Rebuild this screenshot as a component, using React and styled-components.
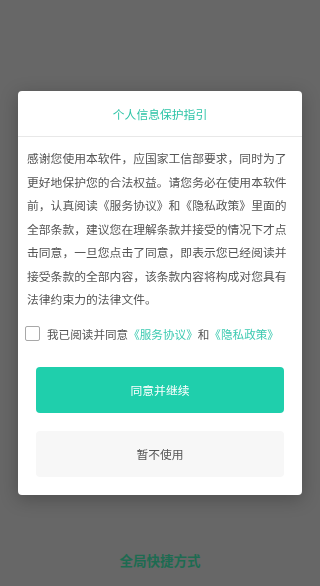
import React, { useState } from "react";
import styled, { createGlobalStyle } from "styled-components";

const COLORS = {
  overlay: "#676767",
  teal: "#1fcfac",
  tealText: "#2ec4a7",
  link: "#3ccab1",
  text: "#555555",
  divider: "#e8e8e8",
  ghost: "#f7f7f7",
};

const GlobalStyle = createGlobalStyle`
  html, body {
    margin: 0;
    padding: 0;
    background: ${COLORS.overlay};
    font-family: "Noto Sans CJK SC", "Noto Sans", sans-serif;
  }
`;

const App = () => {
  const [checked, setChecked] = useState(false);

  return (
    <>
      <GlobalStyle />
      <Page>
        <ShortcutLabel>全局快捷方式</ShortcutLabel>
      </Page>
      <Overlay>
        <Dialog>
          <Header>个人信息保护指引</Header>
          <Body>
            感谢您使用本软件，应国家工信部要求，同时为了更好地保护您的合法权益。请您务必在使用本软件前，认真阅读《服务协议》和《隐私政策》里面的全部条款，建议您在理解条款并接受的情况下才点击同意，一旦您点击了同意，即表示您已经阅读并接受条款的全部内容，该条款内容将构成对您具有法律约束力的法律文件。
          </Body>
          <AgreeRow onClick={() => setChecked(!checked)}>
            <Checkbox $checked={checked} />
            <span>
              我已阅读并同意<Link>《服务协议》</Link>和<Link>《隐私政策》</Link>
            </span>
          </AgreeRow>
          <Actions>
            <Button $primary>同意并继续</Button>
            <Button>暂不使用</Button>
          </Actions>
        </Dialog>
      </Overlay>
    </>
  );
};

const Page = styled.div`
  height: 586px;
  display: flex;
  flex-direction: column;
  justify-content: flex-end;
  align-items: center;
  padding-bottom: 17px;
  box-sizing: border-box;
`;

const ShortcutLabel = styled.div`
  color: #1d6b51;
  font-size: 13.5px;
  font-weight: 700;
  line-height: 18px;
`;

const Overlay = styled.div`
  position: fixed;
  inset: 0;
  display: flex;
  align-items: center;
  justify-content: center;
`;

const Dialog = styled.div`
  width: 284px;
  background: #ffffff;
  border-radius: 4px;
  box-shadow: 0 4px 18px rgba(0, 0, 0, 0.25);
  display: flex;
  flex-direction: column;
  padding-bottom: 18px;
`;

const Header = styled.div`
  height: 45px;
  display: flex;
  align-items: center;
  justify-content: center;
  color: ${COLORS.tealText};
  font-size: 11.8px;
  border-bottom: 1px solid ${COLORS.divider};
`;

const Body = styled.p`
  margin: 0;
  padding: 9px 14px 0 9px;
  color: ${COLORS.text};
  font-size: 11.8px;
  line-height: 23.5px;
`;

const AgreeRow = styled.label`
  display: flex;
  align-items: center;
  gap: 7px;
  margin-top: 13px;
  padding-left: 7px;
  height: 20px;
  color: ${COLORS.text};
  font-size: 11.6px;
  cursor: pointer;
`;

const Checkbox = styled.span`
  width: 15px;
  height: 15px;
  box-sizing: border-box;
  border: 1.5px solid #a8a8a8;
  border-radius: 2px;
  background: ${(p) => (p.$checked ? COLORS.teal : "#fff")};
  flex-shrink: 0;
`;

const Link = styled.span`
  color: ${COLORS.link};
`;

const Actions = styled.div`
  display: flex;
  flex-direction: column;
  gap: 18px;
  margin-top: 23px;
  padding: 0 18px;
`;

const Button = styled.button`
  height: 46px;
  border: none;
  border-radius: 4px;
  font-family: inherit;
  font-size: 11.8px;
  background: ${(p) => (p.$primary ? COLORS.teal : COLORS.ghost)};
  color: ${(p) => (p.$primary ? "#ffffff" : COLORS.text)};
  cursor: pointer;
`;

export default App;
